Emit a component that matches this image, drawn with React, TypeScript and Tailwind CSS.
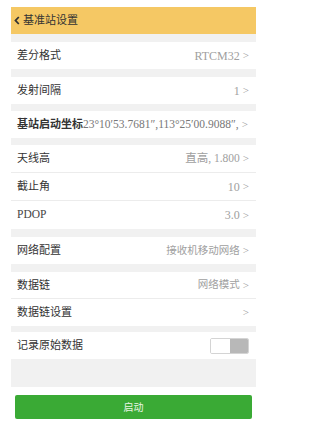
import React from "react";

const FONT = '"Liberation Serif", "Noto Sans CJK SC", serif';

function Chevron() {
  return <span className="ml-[3px] text-[#9a9a9a] text-[11px]">&gt;</span>;
}

function Row({ label, value, border = false, h = "h-[27px]", vsize = "text-[10.5px]" }: { label: string; value?: string; border?: boolean; h?: string; vsize?: string }) {
  return (
    <div className={`${h} bg-white flex items-center justify-between pl-[6px] pr-[7px] ${border ? "border-b border-[#ececec]" : ""}`}>
      <span className="text-[11px] text-[#333]">{label}</span>
      <span className={`flex items-center ${vsize} text-[#a0a0a0]`}>
        {value}
        <Chevron />
      </span>
    </div>
  );
}

export default function App() {
  return (
    <div className="w-[268px] h-[423px] bg-white pt-[7px]" style={{ fontFamily: FONT }}>
      <div className="mx-[11px] w-[245px]">
        <div className="h-[27px] bg-[#f5c864] flex items-center pl-[3px]">
          <svg width="6" height="9" viewBox="0 0 6 9" className="mr-[3px]">
            <path d="M4.8 1 L1.5 4.5 L4.8 8" stroke="#333" strokeWidth="1.8" fill="none" />
          </svg>
          <span className="text-[11px] text-[#333]">基准站设置</span>
        </div>
        <div className="bg-[#f1f1f1] pt-[8px]">
          <Row label="差分格式" value="RTCM32" vsize="text-[12px]" />
          <div className="h-[8px]" />
          <Row label="发射间隔" value="1" vsize="text-[12px]" />
          <div className="h-[7px]" />
          <div className="h-[27px] bg-white flex items-center pl-[6px] pr-[7px] whitespace-nowrap overflow-hidden">
            <span className="text-[11px] text-[#333] font-bold">基站启动坐标</span>
            <span className="text-[11.5px] text-[#777]">23°10′53.7681″,113°25′00.9088″,</span>
            <Chevron />
          </div>
          <div className="h-[7px]" />
          <Row label="天线高" value="直高, 1.800" border h="h-[28px]" vsize="text-[11.5px]" />
          <Row label="截止角" value="10" border h="h-[28px]" vsize="text-[12px]" />
          <div className="h-[28px] bg-white flex items-center justify-between pl-[6px] pr-[7px]">
            <span className="text-[11.5px] text-[#444]">PDOP</span>
            <span className="flex items-center text-[12px] text-[#a0a0a0]">
              3.0
              <Chevron />
            </span>
          </div>
          <div className="h-[8px]" />
          <Row label="网络配置" value="接收机移动网络" />
          <div className="h-[8px]" />
          <Row label="数据链" value="网络模式" border />
          <Row label="数据链设置" value="" h="h-[27px]" />
          <div className="h-[6px]" />
          <div className="h-[27px] bg-white flex items-center justify-between pl-[6px] pr-[7px]">
            <span className="text-[11px] text-[#333]">记录原始数据</span>
            <div className="flex w-[39px] h-[16px] border border-[#d4d4d4] rounded-[2px] overflow-hidden">
              <div className="flex-1 bg-white" />
              <div className="flex-1 bg-[#b8b8b8]" />
            </div>
          </div>
          <div className="h-[28px]" />
        </div>
        <div className="pt-[8px] px-[4px]">
          <div className="h-[24px] bg-[#3aaa35] rounded-[2px] flex items-center justify-center text-[10px] text-[#e8f5e4]">
            启动
          </div>
        </div>
      </div>
    </div>
  );
}
